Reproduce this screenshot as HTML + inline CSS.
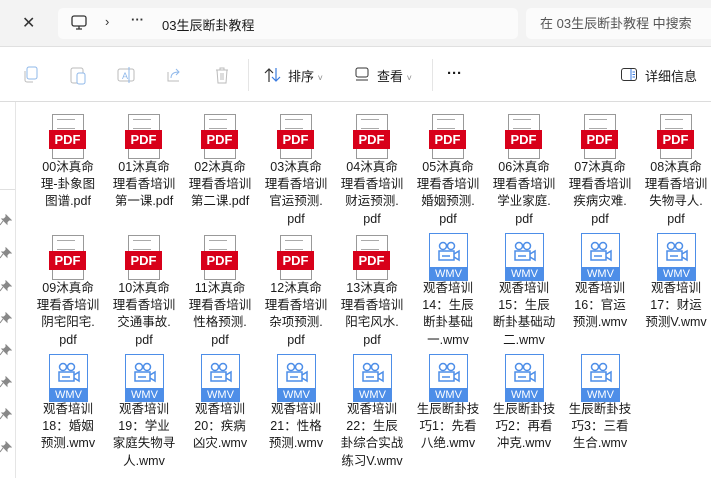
<!DOCTYPE html>
<html><head><meta charset="utf-8"><style>
*{margin:0;padding:0;box-sizing:border-box}
body{width:711px;height:478px;overflow:hidden;background:#fff;font-family:"Liberation Sans","Noto Sans CJK SC",sans-serif;position:relative;color:#1a1a1a}
.top{position:absolute;left:0;top:0;width:711px;height:47px;background:#f3f3f3;border-bottom:1px solid #e0e0e0}
.addr{position:absolute;left:58px;top:8px;width:460px;height:31px;background:#fbfbfb;border-radius:5px}
.srch{position:absolute;left:526px;top:8px;width:190px;height:31px;background:#fbfbfb;border-radius:5px;font-size:13px;color:#555;line-height:31px;padding-left:14px;white-space:nowrap}
.tb{position:absolute;left:0;top:48px;width:711px;height:54px;border-bottom:1px solid #dcdcdc;background:#fff}
.t{position:absolute;font-size:13px;white-space:nowrap}
.tile{position:absolute;width:76px;text-align:center}
.tile .ic{position:relative;width:40px;height:48px;margin:0 auto}
.tile .nm{font-size:12.5px;line-height:17.4px;margin-top:-1.5px;white-space:nowrap}
.pdfp{position:absolute;left:4px;top:2px;width:32px;height:45px;background:#fff;border:1px solid #999}
.pdfb{position:absolute;left:1px;top:18px;width:37px;height:19px;background:#d8001a;color:#fff;font-weight:bold;font-size:13px;line-height:19px;text-align:center}
.wp{position:absolute;left:1px;top:0;width:39px;height:48px;background:#fff;border:1.5px solid #4d8ee8}
.wb{position:absolute;left:1px;top:34px;width:39px;height:14px;background:#4d8ee8;color:#fff;font-size:11px;line-height:14px;text-align:center}
.side{position:absolute;left:15px;top:102px;width:1px;height:376px;background:#e5e5e5}
.pin{position:absolute;left:0}
</style></head><body>
<div class="top">
 <div class="t" style="left:22px;top:13px;font-size:16px;color:#333">✕</div>
 <div class="addr"></div>
 <svg style="position:absolute;left:71px;top:15px" width="16" height="16" viewBox="0 0 16 16"><rect x="1" y="1" width="14" height="10" rx="2" fill="none" stroke="#333" stroke-width="1.3"/><path d="M5 14h6M8 11v3" stroke="#333" stroke-width="1.3"/></svg>
 <div class="t" style="left:105px;top:14px;color:#333">›</div>
 <div class="t" style="left:131px;top:12px;color:#333;font-weight:bold">···</div>
 <div class="t" style="left:162px;top:15px">03生辰断卦教程</div>
 <div class="srch">在 03生辰断卦教程 中搜索</div>
</div>
<div class="tb">
 <svg style="position:absolute;left:22px;top:18px" width="16" height="18" viewBox="0 0 16 18"><rect x="5" y="1" width="10" height="12" rx="2" fill="none" stroke="#8fb8ea"/><path d="M3 5v9a2 2 0 0 0 2 2h6" fill="none" stroke="#bbb"/></svg>
 <svg style="position:absolute;left:70px;top:17px" width="16" height="20" viewBox="0 0 16 20"><rect x="1" y="3" width="12" height="15" rx="2" fill="none" stroke="#bbb"/><rect x="7" y="8" width="8" height="11" rx="2" fill="#fff" stroke="#8fb8ea"/></svg>
 <svg style="position:absolute;left:117px;top:18px" width="18" height="18" viewBox="0 0 18 18"><rect x="1" y="3" width="16" height="12" rx="2" fill="none" stroke="#bbb"/><text x="5" y="13" font-size="9" fill="#8fb8ea" font-family="Liberation Sans">A</text><path d="M12 1v16" stroke="#8fb8ea"/></svg>
 <svg style="position:absolute;left:165px;top:18px" width="18" height="18" viewBox="0 0 18 18"><path d="M3 6v9h11" fill="none" stroke="#bbb"/><path d="M6 12c0-4 3-6 8-6M11 3l3 3-3 3" fill="none" stroke="#8fb8ea"/></svg>
 <svg style="position:absolute;left:214px;top:18px" width="16" height="18" viewBox="0 0 16 18"><path d="M2 4h12M6 4V2h4v2M3 4l1 13h8l1-13M7 7v7M9 7v7" fill="none" stroke="#bbb"/></svg>
 <div style="position:absolute;left:248px;top:11px;width:1px;height:32px;background:#e5e5e5"></div>
 <svg style="position:absolute;left:264px;top:18px" width="18" height="18" viewBox="0 0 18 18"><path d="M5 16V3M1 7l4-4 4 4" fill="none" stroke="#333" stroke-width="1.2"/><path d="M12 2v13M8 11l4 4 4-4" fill="none" stroke="#3a7be0" stroke-width="1.2"/></svg>
 <div class="t" style="left:288px;top:18px">排序 <span style="font-size:9px;color:#888">˅</span></div>
 <svg style="position:absolute;left:355px;top:19px" width="14" height="16" viewBox="0 0 14 16"><rect x="1" y="1" width="12" height="9" rx="2" fill="none" stroke="#333"/><path d="M1 13h12" stroke="#333"/></svg>
 <div class="t" style="left:377px;top:18px">查看 <span style="font-size:9px;color:#888">˅</span></div>
 <div style="position:absolute;left:432px;top:11px;width:1px;height:32px;background:#e5e5e5"></div>
 <div class="t" style="left:447px;top:17px;font-weight:bold;font-size:15px">···</div>
 <svg style="position:absolute;left:621px;top:20px" width="16" height="13" viewBox="0 0 16 13"><rect x="0.5" y="0.5" width="15" height="12" rx="2.5" fill="none" stroke="#333"/><path d="M10 1v11M11.5 4h2.5M11.5 6.5h2.5M11.5 9h2.5" stroke="#3a7be0"/></svg>
 <div class="t" style="left:645px;top:18px">详细信息</div>
</div>
<div class="side"></div>
<div style="position:absolute;left:0;top:189px;width:15px;height:1px;background:#e0e0e0"></div>
<div id="pins"></div>
<div id="g"></div>
<script>
var ph='';[220,253,286,318,350,382,414,447].forEach(function(y){ph+='<svg class="pin" style="top:'+(y-6)+'px" width="12" height="12" viewBox="0 0 12 12"><path d="M6 1l5 5-2 0-2 2 0 2-5-5 2 0 2-2z M3 7l-3 4" fill="#888" stroke="#888" stroke-width="1"/></svg>';});
document.getElementById('pins').innerHTML=ph;
var items=[
["p","00沐真命|理-卦象图|图谱.pdf"],["p","01沐真命|理看香培训|第一课.pdf"],["p","02沐真命|理看香培训|第二课.pdf"],["p","03沐真命|理看香培训|官运预测.|pdf"],["p","04沐真命|理看香培训|财运预测.|pdf"],["p","05沐真命|理看香培训|婚姻预测.|pdf"],["p","06沐真命|理看香培训|学业家庭.|pdf"],["p","07沐真命|理看香培训|疾病灾难.|pdf"],["p","08沐真命|理看香培训|失物寻人.|pdf"],
["p","09沐真命|理看香培训|阴宅阳宅.|pdf"],["p","10沐真命|理看香培训|交通事故.|pdf"],["p","11沐真命|理看香培训|性格预测.|pdf"],["p","12沐真命|理看香培训|杂项预测.|pdf"],["p","13沐真命|理看香培训|阳宅风水.|pdf"],["w","观香培训|14：生辰|断卦基础|一.wmv"],["w","观香培训|15：生辰|断卦基础动|二.wmv"],["w","观香培训|16：官运|预测.wmv"],["w","观香培训|17：财运|预测V.wmv"],
["w","观香培训|18：婚姻|预测.wmv"],["w","观香培训|19：学业|家庭失物寻|人.wmv"],["w","观香培训|20：疾病|凶灾.wmv"],["w","观香培训|21：性格|预测.wmv"],["w","观香培训|22：生辰|卦综合实战|练习V.wmv"],["w","生辰断卦技|巧1：先看|八绝.wmv"],["w","生辰断卦技|巧2：再看|冲克.wmv"],["w","生辰断卦技|巧3：三看|生合.wmv"]];
var cam='<svg style="position:absolute;left:9px;top:8px" width="24" height="22" viewBox="0 0 24 22"><circle cx="6" cy="5" r="3.5" fill="none" stroke="#4d8ee8" stroke-width="1.5"/><circle cx="14" cy="5" r="3.5" fill="none" stroke="#4d8ee8" stroke-width="1.5"/><rect x="2" y="10" width="15" height="9" fill="none" stroke="#4d8ee8" stroke-width="1.5"/><path d="M17 13l5-3v9l-5-3M5 15h8" fill="none" stroke="#4d8ee8" stroke-width="1.5"/></svg>';
var tops=[112,233,354],h='';
items.forEach(function(it,i){var r=Math.floor(i/9),c=i%9;var x=68+76*c-38;
var ic=it[0]=='p'?'<div class="pdfp"><div style="position:absolute;left:4px;top:4px;width:18px;border-top:1px solid #aaa;height:10px;border-bottom:1px solid #aaa"></div></div><div class="pdfb">PDF</div>':'<div class="wp"></div>'+cam+'<div class="wb">WMV</div>';
h+='<div class="tile" style="left:'+x+'px;top:'+tops[r]+'px"><div class="ic">'+ic+'</div><div class="nm">'+it[1].split('|').join('<br>')+'</div></div>';});
document.getElementById('g').innerHTML=h;
</script>
</body></html>
